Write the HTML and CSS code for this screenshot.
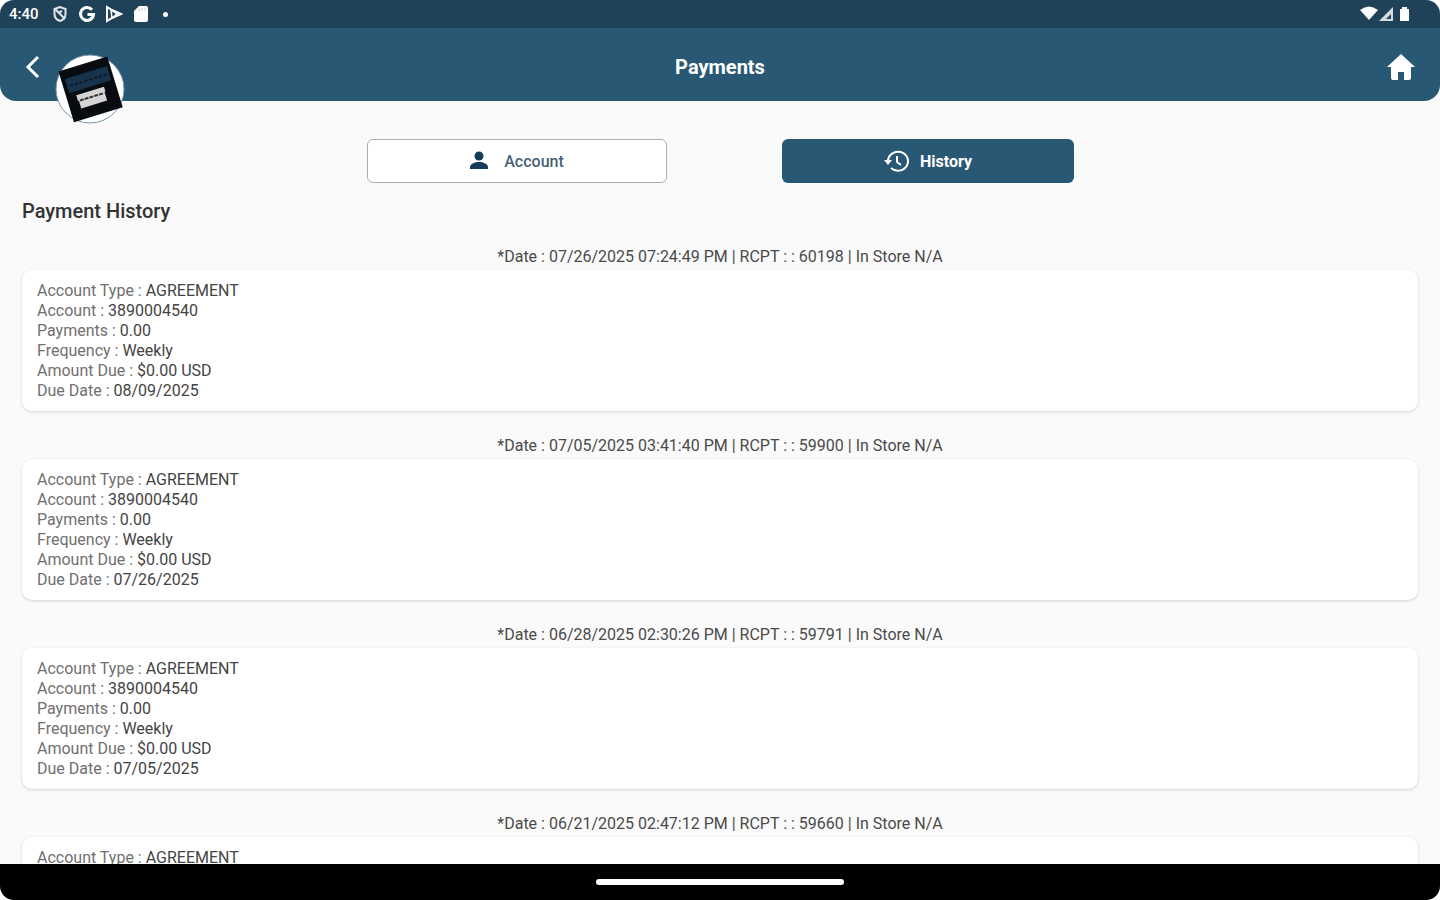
FILE: index.html
```html
<!DOCTYPE html>
<html lang="en">
<head>
<meta charset="utf-8">
<meta name="viewport" content="width=device-width, initial-scale=1">
<title>Payments</title>
<link rel="stylesheet" href="styles.css">
</head>
<body>
<div class="device">
  <div class="status-bar">
    <div class="status-left">
      <span class="clock">4:40</span>
      <svg class="status-icon" viewBox="0 0 18 18" fill="none" stroke="#dfe5e9" stroke-width="2"><path d="M9 2 3.500 4v5c0 3.500 2.500 6 5.500 7 3-1 5.500-3.500 5.500-7V4z"/><path d="m4 4 10 10M7 8l4-2"/></svg>
      <svg class="status-icon" viewBox="0 0 18 18" fill="none" stroke="#fff" stroke-width="3"><path d="M14 4.700A6.500 6.500 0 1 0 15.500 9.500H9.500"/></svg>
      <svg class="status-icon" viewBox="0 0 18 18" fill="none" stroke="#fff" stroke-width="2"><path d="M2 2v14l5-3 9-4-9-4z"/><path d="m6 5 1 8 5-4z" stroke-width="1.500"/></svg>
      <svg class="status-icon" viewBox="0 0 18 18"><path fill="#fff" d="M7 1h7a2 2 0 0 1 2 2v12a2 2 0 0 1-2 2H4a2 2 0 0 1-2-2V6z"/><path d="M7 3v3M10 3v3M13 3v3" stroke="#c9d1d7"/></svg>
      <span class="more-dot"></span>
    </div>
    <svg class="status-right" viewBox="0 0 52 18" fill="#fff"><path d="M0 5q9-7 18 0l-9 10z"/><path d="M19 16 33 2v14z" fill="#d5dce1"/><path d="m26 14 5-5v5z" fill="#24435a"/><path d="M40 4h2V2h5v2h2v12h-9z"/></svg>
  </div>

  <header class="app-bar">
    <button class="icon-button" aria-label="Back"><svg class="back-icon" viewBox="0 0 16 24" fill="none" stroke="#fff" stroke-width="3"><path d="M14 2 4 12l10 10"/></svg></button>
    <h1 class="title">Payments</h1>
    <button class="icon-button" aria-label="Home"><svg class="home-icon" viewBox="0 0 30 28"><path fill="#fff" d="M15 1 1 14h4v11a2 2 0 0 0 2 2h5v-8h6v8h5a2 2 0 0 0 2-2V14h4z"/></svg></button>
    <svg class="avatar" viewBox="0 0 70 70"><circle cx="35" cy="35" r="34" fill="#fff" stroke="#7797ab" stroke-width="1"/><g transform="rotate(-17 35 35)"><rect x="10" y="9" width="51" height="53" fill="#080b10"/><path fill="#17334b" d="M14 18h44v15H14z"/><path d="M17 26h38" stroke="#0c1b29" stroke-width="2" stroke-dasharray="3 2"/><path fill="#d4d4d4" d="M20 37h29v5h-1v9H21v-8h-1z"/><path d="M22 43h25" stroke="#333" stroke-width="2" stroke-dasharray="4 1"/></g></svg>
  </header>

  <main class="content">
    <nav class="tabs" aria-label="Payment views">
      <button class="tab tab-account"><svg class="person-icon" viewBox="0 0 20 20" fill="#143d5c"><circle cx="10" cy="5" r="4.500"/><path d="M1 18v-2c0-3 5-5 9-5s9 2 9 5v2z"/></svg>Account</button>
      <button class="tab tab-history" aria-current="page"><svg class="history-icon" viewBox="0 0 26 24" fill="none" stroke="#fff" stroke-width="2"><path d="M5 12a10 9.500 0 1 1 3 7"/><path d="M14 7v6l4 3"/><path fill="#fff" stroke="none" d="M1 11h8l-4 5z"/></svg>History</button>
    </nav>
    <h2 class="section-title">Payment History</h2>

    <section class="record">
      <h3 class="receipt">*Date : 07/26/2025 07:24:49 PM | RCPT : : 60198 | In Store N/A</h3>
      <dl class="card">
        <div><dt>Account Type :</dt> <dd>AGREEMENT</dd></div>
        <div><dt>Account :</dt> <dd>3890004540</dd></div>
        <div><dt>Payments :</dt> <dd>0.00</dd></div>
        <div><dt>Frequency :</dt> <dd>Weekly</dd></div>
        <div><dt>Amount Due :</dt> <dd>$0.00 USD</dd></div>
        <div><dt>Due Date :</dt> <dd>08/09/2025</dd></div>
      </dl>
    </section>
    <section class="record">
      <h3 class="receipt">*Date : 07/05/2025 03:41:40 PM | RCPT : : 59900 | In Store N/A</h3>
      <dl class="card">
        <div><dt>Account Type :</dt> <dd>AGREEMENT</dd></div>
        <div><dt>Account :</dt> <dd>3890004540</dd></div>
        <div><dt>Payments :</dt> <dd>0.00</dd></div>
        <div><dt>Frequency :</dt> <dd>Weekly</dd></div>
        <div><dt>Amount Due :</dt> <dd>$0.00 USD</dd></div>
        <div><dt>Due Date :</dt> <dd>07/26/2025</dd></div>
      </dl>
    </section>
    <section class="record">
      <h3 class="receipt">*Date : 06/28/2025 02:30:26 PM | RCPT : : 59791 | In Store N/A</h3>
      <dl class="card">
        <div><dt>Account Type :</dt> <dd>AGREEMENT</dd></div>
        <div><dt>Account :</dt> <dd>3890004540</dd></div>
        <div><dt>Payments :</dt> <dd>0.00</dd></div>
        <div><dt>Frequency :</dt> <dd>Weekly</dd></div>
        <div><dt>Amount Due :</dt> <dd>$0.00 USD</dd></div>
        <div><dt>Due Date :</dt> <dd>07/05/2025</dd></div>
      </dl>
    </section>
    <section class="record">
      <h3 class="receipt">*Date : 06/21/2025 02:47:12 PM | RCPT : : 59660 | In Store N/A</h3>
      <dl class="card">
        <div><dt>Account Type :</dt> <dd>AGREEMENT</dd></div>
      </dl>
    </section>
  </main>

  <div class="system-nav"><span class="gesture-handle"></span></div>
</div>
</body>
</html>
```
FILE: styles.css
```css
* { box-sizing: border-box; }
body { margin: 0; background: #fff; font-family: Roboto, "Liberation Sans", sans-serif; color: #333; }
h1, h2, h3, dl, dd { margin: 0; }
button { font: inherit; cursor: pointer; }
svg { display: block; flex: none; }

.device {
  display: flex;
  flex-direction: column;
  height: 100vh;
  overflow: hidden;
  border-radius: 14px;
  background: #fafafa;
}

.status-bar {
  flex: none;
  display: flex;
  justify-content: space-between;
  align-items: center;
  height: 28px;
  padding: 0 28px 0 9px;
  background: #204259;
  color: #fff;
}
.status-left { display: flex; align-items: center; gap: 9px; }
.clock { font-size: 15px; font-weight: 500; margin-right: 3px; }
.status-icon { width: 18px; height: 18px; }
.more-dot { width: 5px; height: 5px; margin-left: 4px; border-radius: 50%; background: #fff; }
.status-right { width: 52px; height: 18px; }

.app-bar {
  flex: none;
  position: relative;
  z-index: 1;
  display: flex;
  justify-content: space-between;
  align-items: center;
  height: 73px;
  padding: 5px 24px 0;
  border-radius: 0 0 16px 16px;
  background: #295875;
  color: #fff;
}
.app-bar .title { font-size: 20px; line-height: 24px; font-weight: 700; }
.icon-button {
  display: flex;
  align-items: center;
  justify-content: flex-start;
  width: 40px;
  height: 40px;
  padding: 0;
  border: 0;
  background: none;
}
.icon-button:last-of-type { justify-content: flex-end; }
.back-icon { width: 16px; height: 24px; }
.home-icon { width: 30px; height: 28px; }
.avatar { position: absolute; left: 55px; top: 26px; width: 70px; height: 70px; }

.content { flex: 1; min-height: 0; overflow: hidden; padding: 38px 22px 0; }
.tabs { display: flex; justify-content: center; align-items: center; gap: 115px; }
.tab {
  display: flex;
  align-items: center;
  justify-content: center;
  height: 44px;
  border-radius: 6px;
  font-size: 16px;
  font-weight: 500;
}
.tab-account { width: 300px; gap: 15px; border: 1px solid #a6b0b6; background: #fff; color: #486174; }
.tab-history { width: 292px; gap: 11px; border: 0; background: #295875; color: #fff; font-weight: 700; }
.person-icon { width: 20px; height: 20px; }
.history-icon { width: 26px; height: 24px; }

.section-title { margin-top: 16px; font-size: 20px; line-height: 24px; font-weight: 500; color: #333; }
.record { margin-bottom: 25px; }
.section-title + .record { margin-top: 24px; }
.receipt { padding-bottom: 3px; text-align: center; font-size: 16px; line-height: 20px; font-weight: 400; color: #4a4a4a; }
.card {
  padding: 11px 15px 10px;
  border-radius: 10px;
  background: #fff;
  box-shadow: 0 1px 3px rgba(0, 0, 0, 0.16);
  font-size: 16px;
  line-height: 20px;
}
.card dt, .card dd { display: inline; }
.card dt { color: #707070; }
.card dd { color: #444; }

.system-nav {
  flex: none;
  display: flex;
  align-items: center;
  justify-content: center;
  height: 36px;
  background: #000;
}
.gesture-handle { width: 248px; height: 6px; border-radius: 3px; background: #fff; }
```
